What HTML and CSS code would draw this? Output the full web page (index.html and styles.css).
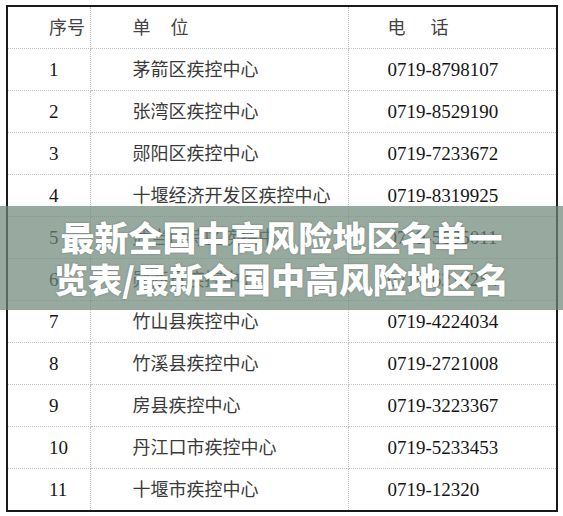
FILE: index.html
```html
<!DOCTYPE html>
<html lang="zh">
<head>
<meta charset="utf-8">
<title>十堰市疾控中心电话</title>
<link rel="stylesheet" href="styles.css">
</head>
<body>
<div class="page">
  <table class="list">
    <colgroup>
      <col class="c1"><col class="c2"><col class="c3">
    </colgroup>
    <tbody>
      <tr class="head"><td>序号</td><td class="h2">单 位</td><td class="h3">电 话</td></tr>
      <tr><td class="num">1</td><td>茅箭区疾控中心</td><td class="num">0719-8798107</td></tr>
      <tr><td class="num">2</td><td>张湾区疾控中心</td><td class="num">0719-8529190</td></tr>
      <tr><td class="num">3</td><td>郧阳区疾控中心</td><td class="num">0719-7233672</td></tr>
      <tr><td class="num">4</td><td>十堰经济开发区疾控中心</td><td class="num">0719-8319925</td></tr>
      <tr><td class="num">5</td><td>武当山特区疾控中心</td><td class="num">0719-5665011</td></tr>
      <tr><td class="num">6</td><td>郧西县疾控中心</td><td class="num">0719-6212254</td></tr>
      <tr><td class="num">7</td><td>竹山县疾控中心</td><td class="num">0719-4224034</td></tr>
      <tr><td class="num">8</td><td>竹溪县疾控中心</td><td class="num">0719-2721008</td></tr>
      <tr><td class="num">9</td><td>房县疾控中心</td><td class="num">0719-3223367</td></tr>
      <tr><td class="num">10</td><td>丹江口市疾控中心</td><td class="num">0719-5233453</td></tr>
      <tr><td class="num">11</td><td>十堰市疾控中心</td><td class="num">0719-12320</td></tr>
    </tbody>
  </table>
  <div class="band">
    <p class="title">最新全国中高风险地区名单一览表/最新全国中高风险地区名</p>
  </div>
</div>
</body>
</html>
```

FILE: styles.css
```css
html, body {
  margin: 0;
  padding: 0;
  background: #ffffff;
}

.page {
  position: relative;
  width: 563px;
  height: 516px;
  padding: 5px 7px 0 6px;
  box-sizing: border-box;
  overflow: hidden;
}

.list {
  width: 550px;
  border-collapse: collapse;
  table-layout: fixed;
  border: 2px solid #1a1a1a;
  font-family: "Noto Sans CJK SC", sans-serif;
  font-size: 18px;
  color: #3a3a3a;
}

.c1 { width: 83px; }
.c2 { width: 258px; }
.c3 { width: 209px; }

.list td {
  height: 38px;
  padding: 0 0 3px 0;
  border: 1px dotted #c4c4c4;
  vertical-align: middle;
  white-space: nowrap;
  line-height: 1;
}

.list td:nth-child(1) { padding-left: 41px; }
.list td:nth-child(2) { padding-left: 42px; }
.list td:nth-child(3) { padding-left: 39px; }

.list tr:first-child td { border-top: none; }
.list tr:last-child td { border-bottom: none; }
.list td:first-child { border-left: none; }
.list td:last-child { border-right: none; }

.list .num {
  font-family: "Liberation Serif", "Times New Roman", serif;
  font-size: 19px;
  color: #151515;
  padding-bottom: 1px;
  height: 40px;
}

.head td {
  color: #444;
}
.head .h2 { word-spacing: 16px; }
.head .h3 { word-spacing: 21px; }

.band {
  position: absolute;
  left: 0;
  right: 0;
  top: 206px;
  height: 104px;
  background: rgba(112, 136, 123, 0.72);
  display: flex;
  align-items: center;
  justify-content: center;
}

.title {
  margin: 0;
  width: 464px;
  text-align: center;
  font-family: "Noto Sans CJK SC", sans-serif;
  font-weight: 900;
  font-size: 34px;
  line-height: 42px;
  color: #ffffff;
  text-shadow: 0 0 2px rgba(60, 70, 65, 0.5);
}
```
